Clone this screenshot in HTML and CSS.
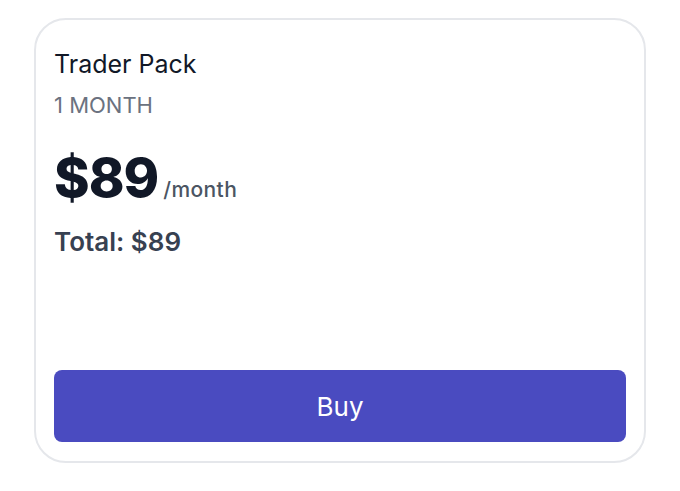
FILE: index.html
```html
<!DOCTYPE html>
<html>
<head>
<meta charset="utf-8">
<link rel="stylesheet" href="styles.css">
</head>
<body>
<div class="card">
  <div class="title">Trader Pack</div>
  <div class="period">1 MONTH</div>
  <div class="price"><span class="amount">$89</span><span class="unit">/month</span></div>
  <div class="total">Total: $89</div>
  <button class="buy">Buy</button>
</div>
</body>
</html>
```
FILE: styles.css
```css
html, body { margin: 0; padding: 0; background: #fff; }
body {
  padding: 18px 34px;
  font-family: Inter, "Noto Sans", sans-serif;
}
.card {
  box-sizing: border-box;
  width: 612px;
  height: 445px;
  border: 2px solid #e5e7eb;
  border-radius: 32px;
  padding: 26px 18px 19px 18px;
  display: flex;
  flex-direction: column;
}
.title {
  font-size: 25px;
  color: #111827;
  line-height: 36px;
}
.period {
  font-size: 22px;
  color: #6b7280;
  line-height: 30px;
  margin-top: 8px;
}
.price {
  display: flex;
  align-items: baseline;
  margin-top: 26px;
  line-height: 64px;
}
.amount {
  font-size: 54px;
  font-weight: 800;
  color: #111827;
  letter-spacing: -1px;
}
.unit {
  font-size: 21px;
  font-weight: 500;
  color: #4b5563;
  margin-left: 5px;
  letter-spacing: 0.4px;
}
.total {
  font-size: 26px;
  font-weight: 600;
  color: #374151;
  line-height: 36px;
  margin-top: 2px;
}
.buy {
  margin-top: auto;
  height: 72px;
  border: none;
  border-radius: 8px;
  background: #4a4bc0;
  color: #fff;
  font-family: Inter, "Noto Sans", sans-serif;
  font-size: 26px;
}
```
